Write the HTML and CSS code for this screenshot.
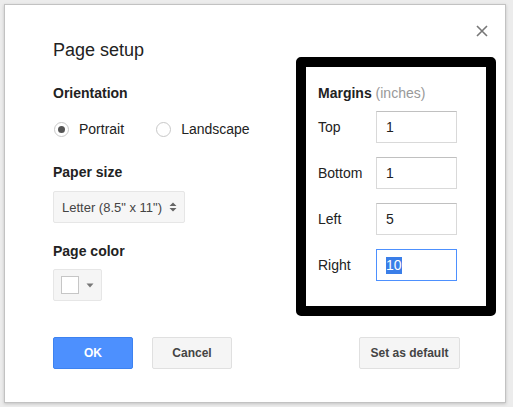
FILE: index.html
```html
<!DOCTYPE html>
<html lang="en">
<head>
<meta charset="utf-8">
<title>Page setup</title>
<link rel="stylesheet" href="styles.css">
</head>
<body>
<div class="dialog">
  <div class="top">
    <div class="left">
      <div class="title">Page setup</div>
      <div class="heading h-orient">Orientation</div>
      <div class="radios">
        <span class="radio checked"></span><span class="rlabel">Portrait</span>
        <span class="radio r2"></span><span class="rlabel">Landscape</span>
      </div>
      <div class="heading h-paper">Paper size</div>
      <div class="select">
        <span>Letter (8.5" x 11")</span>
        <svg class="updown" width="8" height="10" viewBox="0 0 8 10"><path d="M4 0.5 L7.5 4 L0.5 4 Z M0.5 6 L7.5 6 L4 9.5 Z" fill="#666"/></svg>
      </div>
      <div class="heading h-color">Page color</div>
      <div class="colorbtn">
        <span class="swatch"></span>
        <svg class="caret" width="8" height="5" viewBox="0 0 8 5"><path d="M0.5 0.5 L7.5 0.5 L4 4.5 Z" fill="#777"/></svg>
      </div>
    </div>
    <div class="right">
      <svg class="close" width="12" height="12" viewBox="0 0 12 12"><path d="M1 1 L11 11 M11 1 L1 11" stroke="#777" stroke-width="1.6" fill="none"/></svg>
      <div class="box">
        <div class="mhead"><b>Margins</b> <span class="unit">(inches)</span></div>
        <div class="row first"><span class="mlabel">Top</span><div class="field">1</div></div>
        <div class="row"><span class="mlabel">Bottom</span><div class="field">1</div></div>
        <div class="row"><span class="mlabel">Left</span><div class="field">5</div></div>
        <div class="row"><span class="mlabel">Right</span><div class="field focus"><span class="sel">10</span></div></div>
      </div>
    </div>
  </div>
  <div class="actions">
    <button class="btn ok">OK</button>
    <button class="btn cancel">Cancel</button>
    <button class="btn def">Set as default</button>
  </div>
</div>
</body>
</html>
```

FILE: styles.css
```css
html, body {
  margin: 0;
  padding: 0;
}
body {
  background: #ececec;
  padding: 4px 0 0 4px;
  font-family: "Liberation Sans", Arial, sans-serif;
  color: #222;
  height: 407px;
  box-sizing: border-box;
  overflow: hidden;
}
.dialog {
  width: 502px;
  height: 399px;
  box-sizing: border-box;
  background: #fff;
  border: 1px solid #c2c2c2;
  box-shadow: 0 1px 3px rgba(0,0,0,0.18);
  padding-left: 48px;
  display: flex;
  flex-direction: column;
}
.top {
  display: flex;
  padding-right: 9px;
}
.left {
  width: 243px;
  display: flex;
  flex-direction: column;
  align-items: flex-start;
}
.title {
  margin-top: 34px;
  font-size: 18px;
  line-height: 22px;
  color: #222;
}
.heading {
  font-size: 14px;
  font-weight: bold;
  line-height: 18px;
  color: #222;
}
.h-orient { margin-top: 23px; }
.h-paper { margin-top: 24px; }
.h-color { margin-top: 19px; }
.radios {
  margin-top: 17px;
  height: 20px;
  display: flex;
  align-items: center;
  font-size: 14px;
  color: #222;
}
.radio {
  width: 15px;
  height: 15px;
  box-sizing: border-box;
  border: 1px solid #c8c8c8;
  border-radius: 50%;
  background: #fff;
  display: flex;
  align-items: center;
  justify-content: center;
  margin-left: 1px;
}
.radio.checked::after {
  content: "";
  width: 7px;
  height: 7px;
  border-radius: 50%;
  background: #555;
}
.rlabel {
  margin-left: 10px;
}
.radio.r2 {
  margin-left: 32px;
}
.select {
  margin-top: 10px;
  width: 132px;
  height: 32px;
  box-sizing: border-box;
  background: #f6f6f6;
  border: 1px solid #e6e6e6;
  border-radius: 2px;
  display: flex;
  align-items: center;
  padding-left: 8px;
  font-size: 13px;
  color: #444;
}
.updown {
  margin-left: 7px;
}
.colorbtn {
  margin-top: 9px;
  width: 49px;
  height: 32px;
  box-sizing: border-box;
  background: #f5f5f5;
  border: 1px solid #e6e6e6;
  border-radius: 2px;
  display: flex;
  align-items: center;
  padding-left: 7px;
}
.swatch {
  width: 18px;
  height: 18px;
  box-sizing: border-box;
  background: #fff;
  border: 1px solid #c6c6c6;
}
.caret {
  margin-left: 7px;
}
.right {
  width: 200px;
  display: flex;
  flex-direction: column;
}
.close {
  align-self: flex-end;
  margin: 20px 8px 20px 0;
}
.box {
  height: 259px;
  box-sizing: border-box;
  border: 10px solid #000;
  border-radius: 5px;
  background: #fff;
  padding: 17px 0 0 12px;
}
.mhead {
  font-size: 14px;
  line-height: 18px;
  color: #222;
}
.unit {
  color: #999;
}
.row {
  display: flex;
  align-items: center;
  height: 32px;
  margin-top: 14px;
}
.row.first {
  margin-top: 9px;
}
.mlabel {
  width: 58px;
  font-size: 14px;
  color: #222;
}
.field {
  width: 81px;
  height: 32px;
  box-sizing: border-box;
  border: 1px solid #d9d9d9;
  border-top-color: #c0c0c0;
  padding-left: 9px;
  font-size: 14px;
  color: #222;
  display: flex;
  align-items: center;
}
.field.focus {
  border-color: #4d90fe;
}
.sel {
  background: #3a7ee8;
  color: #fff;
  line-height: 17px;
}
.actions {
  margin-top: 21px;
  display: flex;
  padding-right: 45px;
}
.btn {
  height: 32px;
  box-sizing: border-box;
  font-family: "Liberation Sans", Arial, sans-serif;
  font-size: 12px;
  font-weight: bold;
  border-radius: 2px;
  padding: 0;
  margin: 0;
}
.ok {
  width: 80px;
  background: #4d90fe;
  border: 1px solid #3d82f0;
  color: #fff;
}
.cancel {
  width: 80px;
  margin-left: 19px;
  background: #f5f5f5;
  border: 1px solid #e0e0e0;
  color: #444;
}
.def {
  width: 101px;
  margin-left: auto;
  background: #f5f5f5;
  border: 1px solid #e0e0e0;
  color: #444;
}
```
